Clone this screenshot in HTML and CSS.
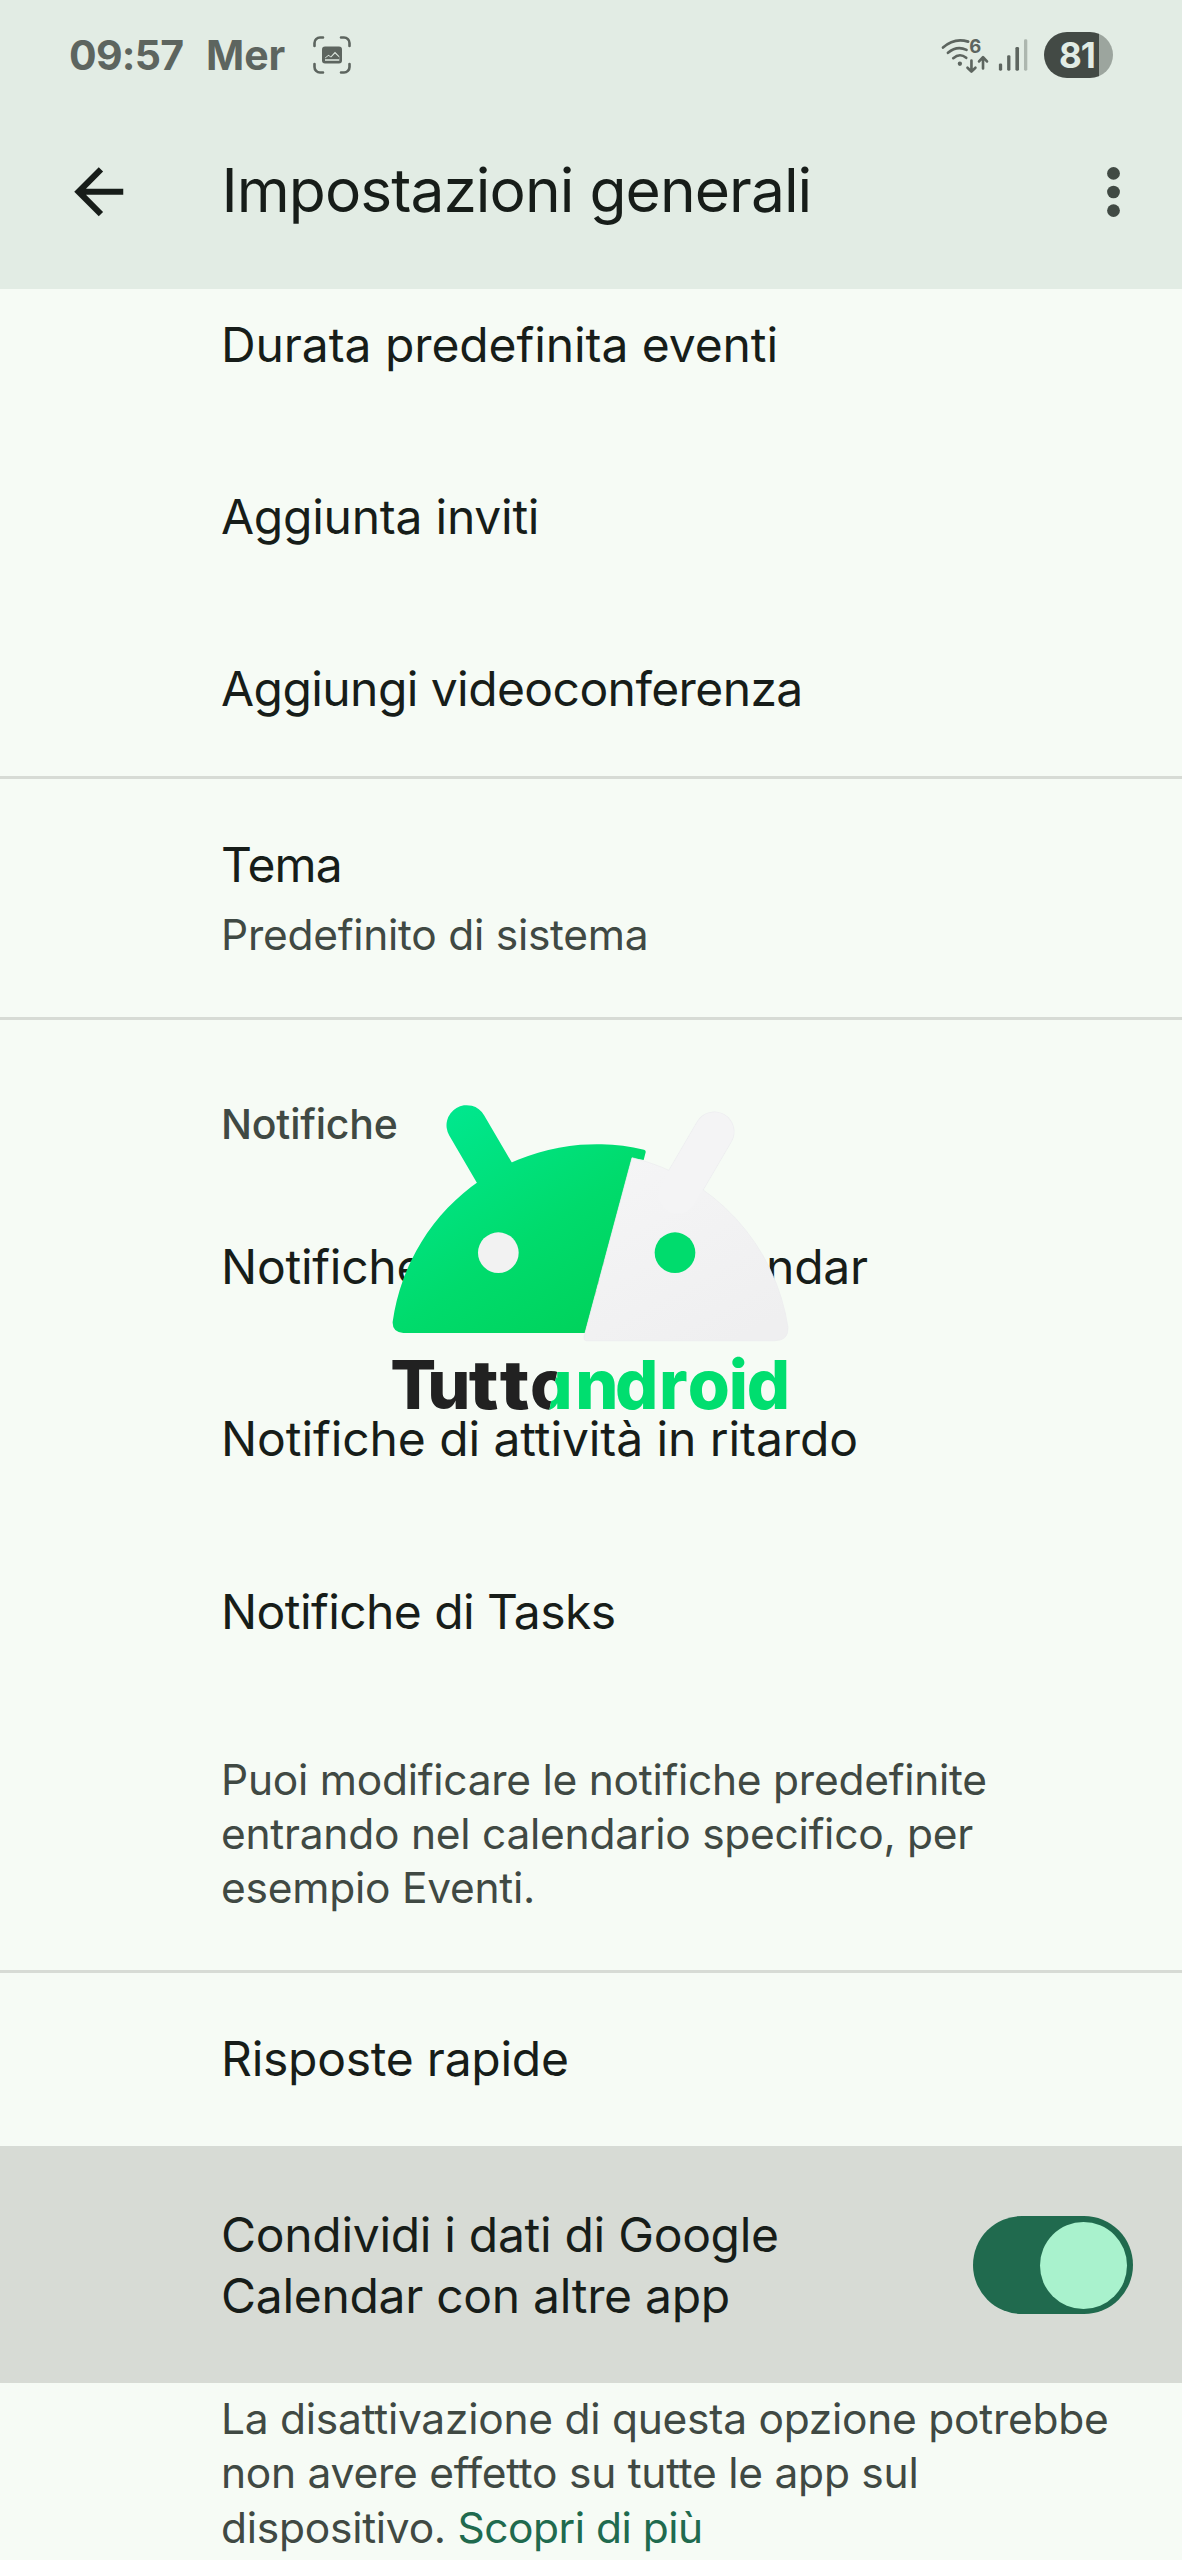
FILE: index.html
```html
<!DOCTYPE html>
<html lang="it">
<head>
<meta charset="utf-8">
<title>Impostazioni generali</title>
<link rel="stylesheet" href="styles.css">
</head>
<body>
<header class="top">
  <div class="status">
    <span class="clock">09:57</span>
    <span class="day">Mer</span>
    <svg class="shot" viewBox="0 0 38 38">
      <g fill="none" stroke="#5d655f" stroke-width="2.6" stroke-linecap="round">
        <path d="M1.5 10V7a5.500 5.500 0 0 1 5.500-5.500h3M28 1.500h3a5.500 5.500 0 0 1 5.500 5.500v3M36.500 28v3a5.500 5.500 0 0 1-5.500 5.500h-3M10 36.500H7A5.500 5.500 0 0 1 1.500 31v-3"/>
      </g>
      <rect x="9" y="10.500" width="20" height="17" rx="3" fill="#5d655f"/>
      <path d="M12 24.800v-3l3.500-3 2.200 1.600 4.300-4.600 4.300 4.400v4.600z" fill="#e2ece4"/>
      <path d="M12 22.600l3.500-2.800 2.500 1.600 4-4 4.300 4.200v1.600H12z" fill="#5d655f"/>
    </svg>
    <div class="indicators">
      <svg class="signal" viewBox="30 60 270 115">
        <g fill="none" stroke="#5d655f" stroke-width="8" stroke-linecap="round" stroke-linejoin="round">
          <path d="M38 95Q72 64 114 77M53 111Q80 88 109 102M69 127Q89 110 108 126"/>
          <path d="M124 134V166M112 156L124 168L136 156M159 158V126M147 137L159 124L171 137"/>
        </g>
        <circle cx="89" cy="144" r="6.500" fill="#5d655f"/>
        <text class="gen" x="117" y="112">6</text>
        <g fill="#5d655f">
          <rect x="207" y="143" width="10" height="22" rx="4"/>
          <rect x="232" y="118" width="10" height="47" rx="4"/>
          <rect x="257" y="93" width="11" height="72" rx="4"/>
          <rect x="283" y="70" width="10" height="95" rx="4" fill="#adb7af"/>
        </g>
      </svg>
      <span class="battery">81</span>
    </div>
  </div>
  <div class="bar">
    <svg class="back" viewBox="0 0 24 24"><path fill="#171d19" d="M20 11H7.830l5.590-5.590L12 4l-8 8 8 8 1.410-1.410L7.830 13H20v-2z"/></svg>
    <h1>Impostazioni generali</h1>
    <svg class="more" viewBox="0 0 14 52" fill="#414a44"><ellipse cx="7.500" cy="7.400" rx="6.400" ry="6.300"/><ellipse cx="7.500" cy="26" rx="6.400" ry="6.300"/><ellipse cx="7.500" cy="44.600" rx="6.400" ry="6.300"/></svg>
  </div>
</header>
<main>
  <section>
    <div class="row">Durata predefinita eventi</div>
    <div class="row loose">Aggiunta inviti</div>
    <div class="row snug">Aggiungi videoconferenza</div>
  </section>
  <section class="theme">
    <div class="name">Tema</div>
    <div class="note">Predefinito di sistema</div>
  </section>
  <section class="alerts">
    <h2>Notifiche</h2>
    <div class="row loose">Notifiche di Google Calendar</div>
    <div class="row">Notifiche di attività in ritardo</div>
    <div class="row snug">Notifiche di Tasks</div>
    <p class="note hint">Puoi modificare le notifiche predefinite<br>entrando nel calendario specifico, per<br>esempio Eventi.</p>
    <svg class="logo" viewBox="0 0 1320 1080">
      <defs>
        <linearGradient id="green" gradientUnits="userSpaceOnUse" x1="250" y1="100" x2="700" y2="760">
          <stop offset="0" stop-color="#00e78d"/><stop offset=".55" stop-color="#00db6c"/><stop offset="1" stop-color="#00d25a"/>
        </linearGradient>
        <linearGradient id="grey" gradientUnits="userSpaceOnUse" x1="800" y1="200" x2="1100" y2="780">
          <stop offset="0" stop-color="#f5f5f6"/><stop offset="1" stop-color="#efeff0"/>
        </linearGradient>
        <clipPath id="before"><path d="M0 780H581L530 1030H0z"/></clipPath>
        <clipPath id="after"><path d="M581 780H1320V1030H530z"/></clipPath>
      </defs>
      <path d="M290 136L400 324" stroke="url(#green)" stroke-width="121" stroke-linecap="round"/>
      <path d="M68 725A618 618 0 0 1 822 209Q828 211 827 217L821 240L786 234L645 759H100Q66 757 68 725z" fill="url(#green)"/>
      <path d="M1033 155L923 343" stroke="#ededf0" stroke-width="121" stroke-linecap="round"/>
      <path d="M786 233A618 618 0 0 1 1254 742Q1256 782 1215 782H648Q640 782 642 770z" fill="url(#grey)" stroke="#ececee" stroke-width="2"/>
      <path d="M1033 155L923 343" stroke="#f4f4f5" stroke-width="117" stroke-linecap="round"/>
      <circle cx="385" cy="518" r="61" fill="#f2f2f2"/>
      <circle cx="915" cy="518" r="61" fill="#00dc6d"/>
      <g class="mark dark" clip-path="url(#before)">
        <text x="61 172" y="986">Tu</text>
        <text transform="translate(296 986) scale(1.150 1)">t</text>
        <text transform="translate(389 986) scale(1.150 1)">t</text>
        <text x="480" y="986">o</text>
      </g>
      <text class="mark lime" clip-path="url(#after)" x="478 616 735 867 953 1076 1130" y="986">android</text>
    </svg>
  </section>
  <section>
    <div class="row loose">Risposte rapide</div>
    <div class="share">
      <div class="label">Condividi i dati di Google<br>Calendar con altre app</div>
      <div class="switch"><div class="knob"></div></div>
    </div>
    <p class="note foot">La disattivazione di questa opzione potrebbe<br>non avere effetto su tutte le app sul<br>dispositivo. <a>Scopri di più</a></p>
  </section>
</main>
</body>
</html>
```

FILE: styles.css
```css
* { box-sizing: border-box; }

body {
  margin: 0;
  height: 2560px;
  overflow: hidden;
  background: #f6fbf5;
  color: #171d19;
  font-family: Inter, "Liberation Sans", sans-serif;
  font-size: 48px;
  white-space: nowrap;
}

h1, h2, p { margin: 0; }
svg { display: block; flex: none; }

.top {
  position: relative;
  z-index: 1;
  height: 289px;
  background: #e2ece4;
}

.status {
  display: flex;
  align-items: center;
  height: 109px;
  padding: 0 69px;
  color: #5d655f;
  font-size: 41px;
  font-weight: 700;
}
.clock { width: 137px; letter-spacing: -0.7px; }
.day { width: 107px; }
.shot { width: 38px; height: 38px; }

.indicators {
  display: flex;
  align-items: center;
  gap: 14px;
  margin-left: auto;
}
.signal { width: 90px; height: 38px; }
.gen { font-size: 56px; font-weight: 700; fill: #5d655f; }
.battery {
  width: 69px;
  height: 46px;
  padding-left: 15px;
  border-radius: 23px;
  background: linear-gradient(90deg, #434a45 55px, #9ca59e 55px);
  color: #e2ece4;
  font-size: 35px;
  line-height: 46px;
  letter-spacing: -1px;
}

.bar {
  display: flex;
  align-items: center;
  height: 165px;
  padding: 0 62px;
}
.back { width: 73.5px; height: 73.5px; }
.bar h1 {
  flex: 1;
  padding: 0 0 4px 86px;
  font-size: 60.5px;
  font-weight: 400;
  letter-spacing: -0.95px;
}
.more { width: 14px; height: 52px; }

main { margin-top: -30.4px; }

section + section { border-top: 3px solid #d7dbd5; }

.row {
  height: 172.4px;
  padding-left: 221px;
  line-height: 172px;
  letter-spacing: -0.08px;
}
.loose { letter-spacing: -0.25px; }
.snug { letter-spacing: -0.58px; }

.theme {
  height: 241.5px;
  padding: 57.5px 0 0 221px;
}
.name { line-height: 58px; letter-spacing: -0.8px; }
.note {
  color: #404943;
  font-size: 42.5px;
  line-height: 54.2px;
  letter-spacing: -0.26px;
}
.theme .note { margin-top: 13.5px; }

.alerts { position: relative; }
.alerts h2 {
  padding: 77px 0 29.800px 221px;
  color: #404943;
  font-size: 41px;
  font-weight: 500;
  line-height: 54px;
  letter-spacing: -0.2px;
}
.hint { padding: 54.800px 0 54.700px 221px; }

.logo {
  position: absolute;
  left: 370px;
  top: 59.6px;
  width: 440px;
  height: 360px;
}
.mark {
  font-size: 204px;
  font-weight: 800;
  font-feature-settings: "cv11";
}
.dark { fill: #212121; }
.lime { fill: #00de6f; }

.share {
  display: flex;
  align-items: center;
  justify-content: space-between;
  height: 237px;
  padding: 2px 49px 0 221px;
  background: #d7dbd5;
}
.label { line-height: 61.500px; letter-spacing: -0.3px; }
.switch {
  display: flex;
  align-items: center;
  justify-content: flex-end;
  width: 160px;
  height: 98px;
  padding-right: 6px;
  border-radius: 49px;
  background: #206a4e;
}
.knob {
  width: 87px;
  height: 87px;
  border-radius: 50%;
  background: #a9f2cd;
}

.foot { padding: 9.5px 0 0 221px; }
.foot a { color: #206a4e; letter-spacing: -0.5px; }
```
